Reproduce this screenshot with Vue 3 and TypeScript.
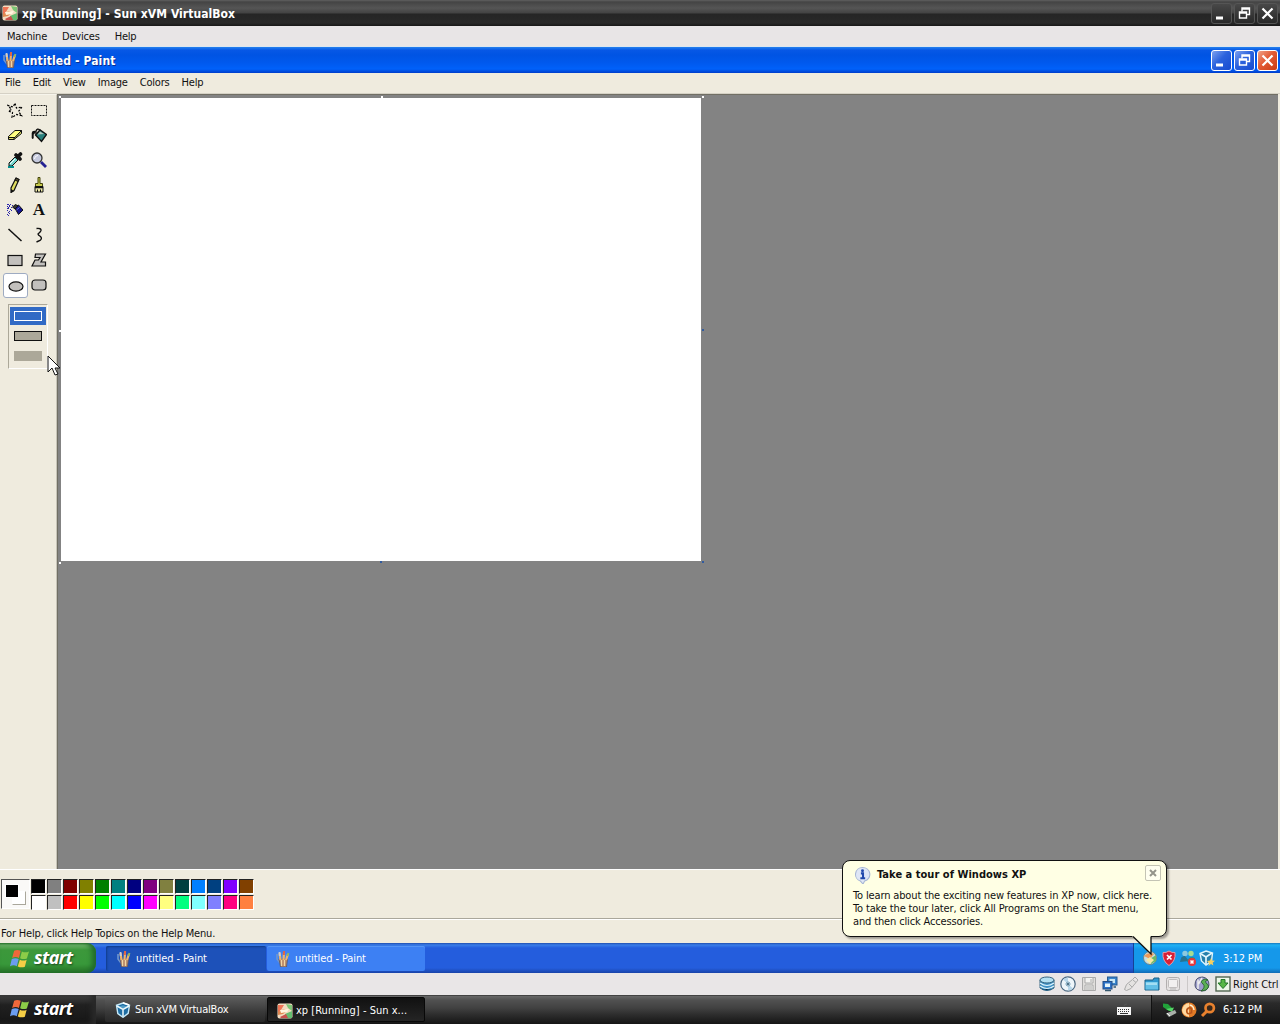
<script setup lang="ts">
const icons: Record<string, string> = {
  vm: '<rect x="0.5" y="0.5" width="15" height="15" rx="2" fill="#f3dcc0"/><path d="M1 2h6l-3 5-3 3z" fill="#ef7556"/><path d="M9 1l6 1v6l-4-3z" fill="#7cc576"/><path d="M1 9q6-5 9-1l-4 3-5 1z" fill="#e08a52"/><path d="M3 7l9-1-2 3-6 1z" fill="#fff6df"/><path d="M8 11l7-3v7H8z" fill="#65bd70"/><path d="M3 14l6-3 2 4H4z" fill="#c8504c"/>',
  paint: '<path d="M2 3v5l3 4" fill="none" stroke="#6f96cf" stroke-width="1.600"/><path d="M4 8h8.500l-1 8h-6z" fill="#b98a6b" stroke="#5b5566" stroke-width=".8"/><path d="M5.500 9L4.500 2M8.500 9L9 1.500M11 9L13 3" stroke="#edb46d" stroke-width="2.200"/><path d="M4.800 5L4.500 1" stroke="#c9cdd8" stroke-width="1.800"/><path d="M8.800 4l.3-4" stroke="#df6545" stroke-width="2"/><path d="M12.300 5L13.500 2" stroke="#8fb565" stroke-width="2"/><path d="M6.500 9v6M9.500 9v6" stroke="#f0d6a4" stroke-width="1.200"/>',
  star: '<path d="M8 1.500l1.500 4.500 5.500-1-3.500 4.500 3 4-5-1-4.500 3 .5-5L1.500 9l3-1.500L1 3.500l5 1.500z" fill="none" stroke="#000" stroke-width="1.200" stroke-dasharray="2 1.500"/>',
  select: '<rect x=".5" y="3.500" width="15" height="10" fill="none" stroke="#111" stroke-dasharray="2 1"/>',
  eraser: '<path d="M1.500 9.500L8 3.500h6.500L8 10.500H1.500z" fill="#ffff80" stroke="#111"/><path d="M1.500 9.500v3H7l7.500-6v-3L8 10.500H1.500" fill="#dddc68" stroke="#111"/><path d="M7 12.500v-2" stroke="#111"/>',
  bucket: '<path d="M5 7V4q1-3 4-1v4" fill="none" stroke="#111" stroke-width="1.300"/><path d="M4.500 8L9 3l6.500 4.500-5 7z" fill="#287f7c" stroke="#111" stroke-width="1.400"/><path d="M6.500 7.500L9 4.500l4 2.500z" fill="#b5c7be"/><path d="M5 4Q1 3 .7 6v5q1 2 2 0V7.500l2-2z" fill="#111"/>',
  pick: '<path d="M9 3l4 4M10.500 5l3-3" stroke="#111" stroke-width="3.600" stroke-linecap="round"/><path d="M8 5l3 3-6 6H2v-3z" fill="#73d5cd" stroke="#111"/><path d="M3 12l5-5" stroke="#fff"/><path d="M1 15h6" stroke="#008d8d" stroke-width="2"/>',
  zoom: '<circle cx="6" cy="6" r="5" fill="#c5c9dd" stroke="#333" stroke-width="1.300"/><path d="M3.500 7q0-3.500 3.500-3.500" fill="none" stroke="#fff"/><path d="M10 10l5 5" stroke="#252292" stroke-width="2.800"/>',
  pencil: '<path d="M9 1l3 1.500-5 11L4 15.500V11z" fill="#e0dd62" stroke="#111" stroke-width="1.200"/><path d="M9 1l3 1.500-1 2-3-1.500z" fill="#544b31" stroke="#111"/><path d="M4 12v3.500L7 14z" fill="#111"/>',
  brush: '<path d="M7 .5h2v6h2.500v3h-7v-3H7z" fill="#c6c94b" stroke="#44440b"/><path d="M4 9.500h8v5.500H4z" fill="#eee9a8" stroke="#111"/><path d="M4 10.500h8" stroke="#111" stroke-width="1.500"/><path d="M6.500 12.500v2.500M9.500 12.500v2.500" stroke="#111"/>',
  spray: '<path d="M7.500 5.500l4-2.500 4.500 5-4.500 4.500z" fill="#14148e" stroke="#111"/><path d="M5.500 5l3-2.500 2.500 1.500-3 3z" fill="#333" stroke="#111"/><path d="M9.500 8l3-2.500" stroke="#7778ce"/><path d="M1 2h1v1H1zm2 0h1v1H3zm2 1h1v1H5zM0 4h1v1H0zm2 0h1v1H2zm2 1h1v1H4zM1 6h1v1H1zm2 1h1v1H3zM0 8h1v1H0zm2 1h1v1H2zm2-1h1v1H4zM1 10h1v1H1zm-1 2h1v1H0zm2-1h1v1H2zM1 13h1v1H1zM0 2h1v1H0zm2 1h1v1H2zM1 5h1v1H1zM0 6h1v1H0z" fill="#2823aa"/>',
  line: '<path d="M1.500 2l13 12" stroke="#111" stroke-width="1.500"/>',
  curve: '<path d="M5.500 1.500q5-.5 4.500 2-.5 1.500-3 3.500 0 1 2.500 2.500 2 2-.5 4l-3.500 1.500" fill="none" stroke="#111" stroke-width="1.400"/>',
  rect: '<rect x="1" y="3.500" width="14" height="10" fill="#c2c0bd" stroke="#111" stroke-width="1.200"/>',
  polygon: '<path d="M4.500 2h10l-4.500 8h4.500v4H1l3-6h3.500L9 5.500H4z" fill="#c2c0bd" stroke="#111" stroke-width="1.200"/>',
  ellipse: '<ellipse cx="8" cy="8.500" rx="7" ry="4.700" fill="#c2c0bd" stroke="#111" stroke-width="1.200"/>',
  round: '<rect x="1" y="3" width="14" height="10" rx="3" fill="#c2c0bd" stroke="#111" stroke-width="1.200"/>',
  flag: '<path d="M3.500 1.500Q6 0 9 1.500L7.500 7.500Q5 6 1.800 7.500z" fill="#f0683b"/><path d="M10 2q3 1.500 6 0l-1.800 6q-3 1-5.700-.3z" fill="#8ccc48"/><path d="M1.500 8.500Q4.500 7 7.300 8.500L5.700 14.500Q3 13 0 14.500z" fill="#6b9df0"/><path d="M8.300 9q3 1.500 5.700 0l-1.500 6q-3 1-6-.3z" fill="#f5ce45"/>',
  cube: '<path d="M8 1l6.500 2.300-1.300 8L8 15.300 2.800 11.500 1.500 3.300z" fill="#1f6da3" stroke="#c6eafa" stroke-width="1.400"/><path d="M4 4.500l4 2 4-2-4-1.300z" fill="#4f9cc7"/><path d="M8 7.500v7M2 4l6 3.500L14 4" stroke="#eefafd" stroke-width="1.500" fill="none"/><path d="M8 .8L14 3" stroke="#fff" stroke-width="1.500"/>',
  info: '<path d="M8 .5a7 6.500 0 0 1 2 12.700L8.500 16 6 13.200A6.500 6.500 0 0 1 8 .5z" fill="#dfe6f6" stroke="#a6b5d5"/><circle cx="8" cy="3.500" r="1.400" fill="#2148ac"/><path d="M6.500 6h2v4.500M6 10.500h4.500" fill="none" stroke="#2148ac" stroke-width="1.900"/>',
  tour: '<circle cx="8" cy="8" r="6.500" fill="#c7dcdf" stroke="#6b878c"/><path d="M2 6Q7 1 12 4L8 9z" fill="#f09a57"/><path d="M8 9l6-4v6l-5 3z" fill="#6bb867"/><path d="M4 10l4-3 4 3-4 4z" fill="#f6e8a4"/>',
  shield: '<path d="M8 1q3 2 6 1.500Q15 11 8 15.500 1 11 2 2.500 5 3 8 1z" fill="#d82036" stroke="#e59aa6"/><path d="M6 5l4.500 4.500M10.500 5L6 9.500" stroke="#fff" stroke-width="1.700"/>',
  messenger: '<circle cx="5" cy="3.500" r="2.700" fill="#8dc9df"/><path d="M0 12q1-7 5-6l4 5z" fill="#28728f"/><circle cx="11" cy="3.500" r="2.700" fill="#a5dc92"/><path d="M7 12q2-7 8-4v5z" fill="#2f8f79"/><circle cx="12" cy="12" r="4" fill="#e6363b"/><path d="M10.500 10.500l3 3m0-3l-3 3" stroke="#fff" stroke-width="1.500"/>',
  guest: '<path d="M7 1l6.500 2-1 8L7 15 2.500 11 1 3.500z" fill="#267fab" stroke="#dff4fa" stroke-width="1.400"/><path d="M2 4l5 3 6-4M7 7v7" stroke="#e2f7ff" stroke-width="1.700" fill="none"/><path d="M12 8l1 2.500 3 .3-2.300 2 .7 2.700-2.400-1.500L9.500 16l.5-3-2-2 3-.4z" fill="#f5cf61"/>',
  disks: '<path d="M1 4v8q7 5 14 0V4" fill="#3f92c6" stroke="#386681"/><ellipse cx="8" cy="4" rx="7" ry="3" fill="#b3e0f2" stroke="#386681"/><path d="M1 7q7 5 14 0M1 10q7 5 14 0" fill="none" stroke="#ddf3fb" stroke-width="1.200"/><path d="M3 13q5 2 9 0" stroke="#1d6290"/>',
  cd: '<circle cx="8" cy="8" r="7.200" fill="#eef5fa" stroke="#4a6780" stroke-width="1.200"/><path d="M8 8L3 3.500Q5 1.700 8 1.500zM8 8l5 4.500q-2 2-5 2z" fill="#b9d7ea"/><circle cx="8" cy="8" r="2" fill="#fff" stroke="#6e9ab3"/><circle cx="8" cy="8" r="1" fill="#174764"/>',
  floppy: '<path d="M1.500 1.500h13v13h-13z" fill="#e0dedc" stroke="#aaa"/><path d="M4 2v5h8V2M4 14V9h8v5" fill="#f4f3f1" stroke="#aaa"/><path d="M10 3v3M5 11h6M5 13h6" stroke="#aaa"/>',
  network: '<rect x="5.500" y="1" width="9.500" height="8" fill="#3b86cd" stroke="#24578f"/><rect x="7.500" y="3" width="5.500" height="4" fill="#c7e6f5"/><rect x="1" y="5.500" width="9" height="7.500" fill="#2d72c8" stroke="#244f88"/><rect x="3" y="7.500" width="5" height="3.500" fill="#e6f5fa"/><path d="M3 14.500h6M11.500 11h2.500" stroke="#35586e" stroke-width="1.300"/>',
  usb: '<path d="M1.500 13.500l2-5 6-5 3.500 3-5 6-4.500 2z" fill="#e4e2e1" stroke="#aaa"/><path d="M10 3l2-2 3 3-2 2.500M6 8l3 3" fill="none" stroke="#aaa"/>',
  folder: '<path d="M1 4h8l1-2h5v12H1z" fill="#2f98cf" stroke="#1d6085"/><path d="M1.500 6h12.500v7.500H1.500z" fill="#62bfe6"/><path d="M2 6.500h11v2.500H2z" fill="#a3def3"/>',
  screen: '<rect x="1.500" y="1.500" width="13" height="13" rx="2" fill="#e5e2e2" stroke="#b2afaf"/><rect x="3.500" y="3.500" width="9" height="8" rx="1" fill="#f2f0f0" stroke="#c0bdbd"/><path d="M5 13h6" stroke="#b5b5b5"/>',
  mouse: '<path d="M1 9Q1 1 8.500 1 15 2 15 9q-1 6-7 6-7-1-7-6z" fill="#9d9dcb" stroke="#4b506f"/><path d="M4 3.500V13M8 2L4.500 8" stroke="#eee" stroke-width="1.500"/><path d="M11 3Q5 5 9 8q3 3-2 7l5-1q5-4 0-7-2-2 2-3z" fill="#5caf54" stroke="#1f5c25" stroke-width=".8"/>',
  capture: '<rect x="1" y="1" width="14" height="14" fill="#eef8e9" stroke="#526552" stroke-width="1.400"/><path d="M6 3.500h4V7h3l-5 5.500L3 7h3z" fill="#58b747" stroke="#24742a"/>',
  eject: '<path d="M1 1.500l5 .5 4 4-3 3-6-4z" fill="#21a13a"/><path d="M4 7l8-1.500L10 10z" fill="#56d566"/><path d="M4 11.500L13 8l1.500 3L7 15z" fill="#a9b0aa"/><path d="M5 11l3 3" stroke="#eee"/>',
  avast: '<circle cx="8" cy="8" r="7.500" fill="#e07a26"/><path d="M8 1v14Q1 13 1 8 2 2 8 1z" fill="#ffd9a0"/><path d="M10.500 10.500q-3 2.500-4.500 0-1-3 1.500-4.500 2.500-.8 3 1.500v4" fill="none" stroke="#b9541a" stroke-width="1.600"/><path d="M8.500 3q4 .5 4.500 5" fill="none" stroke="#fff0cf" stroke-width="1.500"/>',
  key: '<circle cx="9.700" cy="6" r="4.200" fill="#39291c" stroke="#e8812e" stroke-width="2.700"/><path d="M6.500 9.500L2 14" stroke="#e8812e" stroke-width="3"/>',
  keyboard: '<rect x="1" y="5" width="14" height="8" fill="#f5f5f5"/><path d="M2 7.500h12M2 9.500h12" stroke="#333" stroke-dasharray="1 1"/><path d="M4 11.500h8" stroke="#333"/><path d="M8 4q0-2 3-2" fill="none" stroke="#555"/>',
}

const tools: string[] = ['star', 'select', 'eraser', 'bucket', 'pick', 'zoom', 'pencil', 'brush', 'spray', 'text', 'line', 'curve', 'rect', 'polygon', 'ellipse', 'round']
const colors: string[] = [
  '#000000', '#808080', '#800000', '#808000', '#008000', '#008080', '#000080', '#800080', '#808040', '#004040', '#0080ff', '#004080', '#8000ff', '#804000',
  '#ffffff', '#c0c0c0', '#ff0000', '#ffff00', '#00ff00', '#00ffff', '#0000ff', '#ff00ff', '#ffff80', '#00ff80', '#80ffff', '#8080ff', '#ff0080', '#ff8040',
]
const handles: string[] = ['nw', 'n', 'ne', 'w', 'e', 'sw', 's', 'se']
const deviceIcons: string[] = ['disks', 'cd', 'floppy', 'network', 'usb', 'folder', 'screen']
const guestTray: string[] = ['tour', 'shield', 'messenger', 'guest']
const hostTray: string[] = ['eject', 'avast', 'key']
const controls: string[] = ['min', 'restore', 'close']
const glyphs: Record<string, string> = {
  min: '<path d="M4 12.500h7v3H4z" fill="#fff"/>',
  restore: '<path d="M7 7.500V4h7.500v6.500H12M7 5h7.500" fill="none" stroke="#fff" stroke-width="1.400"/><path d="M4.500 8h7v6h-7zM4.500 9h7" fill="none" stroke="#fff" stroke-width="1.400"/>',
  close: '<path d="M4.500 4.500l10 10M14.500 4.500l-10 10" stroke="#fff" stroke-width="2.200"/>',
}
</script>

<template>
  <div class="desktop">
    <header class="title host-title">
      <svg class="icon" viewBox="0 0 16 16" v-html="icons.vm" />
      <span class="host-name">xp [Running] - Sun xVM VirtualBox</span>
      <div class="controls">
        <button v-for="c in controls" :key="c"><svg viewBox="0 0 19 19" v-html="glyphs[c]" /></button>
      </div>
    </header>
    <nav class="host-menu"><span>Machine</span><span>Devices</span><span>Help</span></nav>
    <header class="title guest-title">
      <svg class="icon" viewBox="0 0 16 16" v-html="icons.paint" />
      <span class="guest-name">untitled - Paint</span>
      <div class="controls">
        <button v-for="c in controls" :key="c" :class="c"><svg viewBox="0 0 19 19" v-html="glyphs[c]" /></button>
      </div>
    </header>
    <nav class="guest-menu"><span>File</span><span>Edit</span><span>View</span><span>Image</span><span>Colors</span><span>Help</span></nav>

    <main class="work">
      <aside class="toolbox">
        <div class="tools">
          <div v-for="t in tools" :key="t" class="tool" :class="{ selected: t === 'ellipse' }">
            <b v-if="t === 'text'">A</b>
            <svg v-else viewBox="0 0 16 16" v-html="icons[t]" />
          </div>
        </div>
        <div class="options">
          <div class="option active"><i></i></div>
          <div class="option outlined"><i></i></div>
          <div class="option filled"><i></i></div>
        </div>
        <svg class="cursor" viewBox="0 0 13 21"><path d="M1 1v16l4-4 3 7 3-1-3-6h5z" fill="#fff" stroke="#111" /></svg>
      </aside>
      <section class="stage">
        <div class="canvas"><i v-for="h in handles" :key="h" :class="h"></i></div>
      </section>
    </main>

    <section class="palette">
      <div class="current"><i class="back"></i><i class="front"></i></div>
      <div class="swatches"><i v-for="c in colors" :key="c" :style="{ backgroundColor: c }"></i></div>
    </section>
    <footer class="help"><span>For Help, click Help Topics on the Help Menu.</span></footer>

    <div class="taskbar guest-bar">
      <div class="start"><svg viewBox="0 0 16 16" v-html="icons.flag" /><b>start</b></div>
      <div class="task pressed"><svg viewBox="0 0 16 16" v-html="icons.paint" /><span>untitled - Paint</span></div>
      <div class="task light"><svg viewBox="0 0 16 16" v-html="icons.paint" /><span>untitled - Paint</span></div>
      <div class="tray"><svg v-for="n in guestTray" :key="n" viewBox="0 0 16 16" v-html="icons[n]" /><time>3:12 PM</time></div>
    </div>
    <div class="devices">
      <svg v-for="n in deviceIcons" :key="n" viewBox="0 0 16 16" v-html="icons[n]" />
      <i class="divider"></i>
      <svg viewBox="0 0 16 16" v-html="icons.mouse" />
      <svg viewBox="0 0 16 16" v-html="icons.capture" />
      <span>Right Ctrl</span>
    </div>
    <div class="taskbar host-bar">
      <div class="start"><svg viewBox="0 0 16 16" v-html="icons.flag" /><b>start</b></div>
      <div class="task"><svg viewBox="0 0 16 16" v-html="icons.cube" /><span>Sun xVM VirtualBox</span></div>
      <div class="task pressed"><svg viewBox="0 0 16 16" v-html="icons.vm" /><span>xp [Running] - Sun x...</span></div>
      <svg class="keyboard" viewBox="0 0 16 16" v-html="icons.keyboard" />
      <div class="tray"><svg v-for="n in hostTray" :key="n" viewBox="0 0 16 16" v-html="icons[n]" /><time>6:12 PM</time></div>
    </div>

    <div class="balloon">
      <div class="balloon-head">
        <svg viewBox="0 0 16 16" v-html="icons.info" /><b>Take a tour of Windows XP</b>
        <button><svg viewBox="0 0 14 14"><path d="M4 4l6 6M10 4l-6 6" stroke="#94948b" stroke-width="2" /></svg></button>
      </div>
      <p>To learn about the exciting new features in XP now, click here.</p>
      <p>To take the tour later, click All Programs on the Start menu,</p>
      <p>and then click Accessories.</p>
      <svg class="tail" viewBox="0 0 24 21"><path d="M0 0v1l19 18V0z" fill="#ffffe4" /><path d="M1 1.500l18 17.500V1.500" fill="none" stroke="#111" stroke-width="1.300" /></svg>
    </div>
  </div>
</template>

<style>
body { margin: 0; overflow: hidden; }
</style>

<style scoped>
* { box-sizing: border-box; }
svg { display: block; flex: none; }
button { padding: 0; margin: 0; font: inherit; }
.desktop { position: relative; width: 1280px; height: 1024px; display: flex; flex-direction: column; overflow: hidden; background: #efebde; color: #111; font: 11px/14px "DejaVu Sans Condensed", "DejaVu Sans", sans-serif; font-stretch: condensed; letter-spacing: -0.2px; white-space: nowrap; }
.title { display: flex; align-items: center; color: #fff; font-weight: bold; font-size: 12px; flex: none; }
.title span { padding-top: 1px; }
.title .icon { width: 16px; height: 16px; margin-left: 2px; margin-right: 4px; }
.controls { display: flex; gap: 2px; margin-left: auto; margin-right: 2px; }
.controls button { width: 21px; height: 21px; border-radius: 3px; }
.controls svg { width: 19px; height: 19px; }
.host-title { height: 26px; background: linear-gradient(#606060 0, #444 2px, #555 8px, #434343 13px, #252525 14px, #292929 23px, #171717); }
.host-title .controls button { border: 1px solid #555; background: linear-gradient(#484848, #292929); }
.host-name { letter-spacing: 0.06px; }
.host-menu { height: 21px; flex: none; display: flex; padding: 4px 7px 2px; gap: 15px; background: #e8e5e6; border-bottom: 1px solid #dce6ef; }
.guest-title { height: 26px; background: linear-gradient(#2581ed 0, #0758e6 3px, #0054e3 8px, #0059ee 16px, #0061fa 22px, #003dca 26px); text-shadow: 1px 1px #0b2f91; }
.guest-title .controls button { border: 1px solid #fff; background: linear-gradient(135deg, #7fa2ef, #2b62dd 45%, #174bd0); }
.guest-title .controls .close { background: linear-gradient(135deg, #f0a388, #e35a34 45%, #c93d16); }
.guest-name { letter-spacing: 0.12px; }
.guest-menu { height: 21px; flex: none; display: flex; padding: 3px 5px; gap: 12px; border-bottom: 1px solid #d5d1c5; }

.work { height: 775px; flex: none; display: flex; }
.toolbox { position: relative; width: 57px; flex: none; border-top: 1px solid #f7f5ec; border-right: 1px solid #c7c4b9; padding: 3px 0 0 3px; }
.tools { display: grid; grid-template-columns: 24px 24px; grid-auto-rows: 25px; }
.tool { display: flex; width: 24px; height: 24px; align-items: center; justify-content: center; }
.tool svg { width: 16px; height: 16px; }
.tool b { font: bold 17px/20px "Liberation Serif", serif; letter-spacing: 0; }
.tool.selected { width: 25px; height: 25px; border: 1px solid #9eabc2; border-radius: 3px; background: #fff; }
.options { width: 40px; height: 65px; margin: 6px 0 0 5px; padding: 2px 1px; border: 1px solid; border-color: #aca899 #fff #fff #aca899; }
.option { height: 20px; display: flex; justify-content: center; padding-top: 4px; }
.option i { width: 28px; height: 10px; background: #aca899; }
.option.active { background: #316ac5; height: 18px; margin-bottom: 2px; }
.active i { background: #316ac5; border: 1px solid #fff; }
.outlined i { border: 1px solid #111; }
.cursor { position: absolute; left: 47px; top: 260px; width: 13px; height: 21px; z-index: 2; }
.stage { flex: 1; margin-right: 2px; padding: 3px 0 0 3px; background: #838383; border-top: 1px solid #716f64; border-left: 1px solid #716f64; }
.canvas { position: relative; width: 640px; height: 463px; background: #fff; }
.canvas i { position: absolute; width: 2px; height: 2px; background: #fff; }
.canvas .nw { left: -2px; top: -2px; } .canvas .n { left: 320px; top: -2px; } .canvas .ne { left: 641px; top: -2px; }
.canvas .w { left: -2px; top: 232px; } .canvas .sw { left: -2px; top: 464px; }
.canvas .e { left: 641px; top: 231px; background: #315b9e; } .canvas .s { left: 319px; top: 463px; background: #315b9e; } .canvas .se { left: 641px; top: 463px; background: #315b9e; }

.palette { height: 50px; flex: none; display: flex; padding: 9px 0 0 1px; border-top: 1px solid #fff; border-bottom: 1px solid #aaa79b; }
.current { position: relative; width: 29px; height: 30px; margin-right: 1px; border: 1px solid; border-color: #555 #fff #fff #555; background: #faf9f7; }
.current i { position: absolute; width: 14px; height: 14px; border: 1px solid; border-color: #fff #aaa79b #aaa79b #fff; background: #fff; }
.current .front { left: 3px; top: 4px; background: #000; border-color: #fff; }
.current .back { left: 10px; top: 11px; }
.swatches { display: grid; grid-template-columns: repeat(14, 16px); grid-auto-rows: 16px; }
.swatches i { width: 15px; height: 15px; border: 1px solid; border-color: #222 #fff #fff #222; }
.help { height: 24px; flex: none; padding: 7px 1px 2px; border-top: 1px solid #fff; letter-spacing: -.18px; }

.taskbar { display: flex; flex: none; align-items: center; color: #fff; }
.guest-bar { height: 30px; background: linear-gradient(#1f4eae 0, #3a7de9 2px, #245ddd 5px, #245ddd 25px, #1943a8); }
.start { width: 96px; height: 100%; padding-left: 10px; display: flex; align-items: center; gap: 5px; }
.start svg { width: 19px; height: 19px; }
.start b { margin-top: -2px; font: italic bold 18px/22px "Open Sans", "Noto Sans", sans-serif; letter-spacing: -.6px; text-shadow: 1px 1px 2px #0008; }
.guest-bar .start { border-radius: 0 9px 9px 0; background: linear-gradient(#347d32 0, #70b66b 2px, #3c983b 7px, #38983a 21px, #267226); box-shadow: inset -4px 0 5px #216b2b; }
.task { width: 160px; height: 25px; display: flex; align-items: center; padding-left: 10px; gap: 4px; border-radius: 2px; }
.task svg { width: 16px; height: 16px; }
.guest-bar .task { margin-left: 10px; padding-top: 2px; background: #1d51b9; box-shadow: inset 1px 1px 2px #103c8b; }
.guest-bar .task.light { margin-left: 1px; width: 158px; padding-left: 8px; padding-top: 1px; background: #3d80f3; box-shadow: inset 0 1px #5595f5; }
.guest-bar .task span { letter-spacing: -.1px; }
.tray { height: 100%; margin-left: auto; display: flex; align-items: center; }
.tray svg { width: 16px; height: 16px; }
.guest-bar .tray { width: 147px; padding-left: 8px; gap: 3px; border-left: 1px solid #164194; background: linear-gradient(#1878bd 0, #1fb1f4 2px, #1598ea 6px, #1598ea 25px, #116bb5); }
.tray time { margin-left: 5px; letter-spacing: -.1px; padding-top: 1px; }
.devices { height: 22px; flex: none; display: flex; align-items: center; justify-content: flex-end; gap: 5px; padding-right: 1px; background: #e9e6e7; }
.devices svg { width: 16px; height: 16px; }
.devices .divider { width: 1px; height: 16px; margin: 0 1px; background: #cbc8c8; }
.devices span { width: 46px; margin-left: -3px; padding-top: 1px; letter-spacing: -.15px; }
.host-bar { height: 29px; background: linear-gradient(#1c1c1c 0, #686868 1px, #515151 5px, #414141 13px, #2c2c2c 20px, #151515); }
.host-bar .start { padding-bottom: 2px; background: linear-gradient(#444 0, #363636 4px, #202020 10px, #161616); box-shadow: inset -5px 0 5px #292929; }
.host-bar .task { margin-left: 9px; background: linear-gradient(#5d5d5d, #393939 60%, #292929); }
.host-bar .task.pressed { margin-left: 2px; width: 158px; padding-left: 9px; padding-top: 2px; gap: 3px; letter-spacing: .02px; background: linear-gradient(#111, #252525); border: 1px solid #080808; }
.keyboard { width: 16px; height: 16px; margin-left: 691px; }
.host-bar .tray { width: 129px; padding-left: 10px; gap: 3px; border-left: 1px solid #111; background: linear-gradient(#4e4e4e 0, #2a2a2a 8px, #141414); }
.host-bar .tray time { margin-left: 4px; padding-top: 0; }

.balloon { position: absolute; left: 842px; top: 860px; width: 325px; height: 77px; padding: 6px 4px 0 10px; border: 1px solid #111; border-radius: 8px; background: #ffffe4; box-shadow: 2px 2px 2px #0005; }
.balloon-head { height: 22px; display: flex; align-items: flex-start; }
.balloon-head > svg { width: 17px; height: 17px; margin-left: 1px; }
.balloon-head b { margin-left: 6px; padding-top: 1px; font-size: 11px; letter-spacing: .03px; }
.balloon-head button { width: 16px; height: 16px; margin: -2px 1px 0 auto; border: 1px solid #c4c4b4; border-radius: 2px; background: #fffff0; }
.balloon-head button svg { width: 14px; height: 14px; }
.balloon p { margin: 0; height: 13px; line-height: 13px; letter-spacing: -.14px; }
.tail { position: absolute; left: 289px; top: 74px; width: 24px; height: 21px; }
</style>
